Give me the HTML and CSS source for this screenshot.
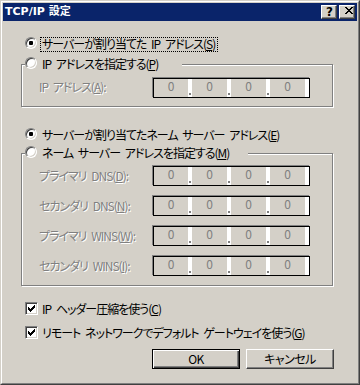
FILE: index.html
```html
<!DOCTYPE html>
<html lang="ja">
<head>
<meta charset="utf-8">
<title>TCP/IP 設定</title>
<link rel="stylesheet" href="styles.css">
</head>
<body>
<div class="window">
  <div class="frame">
    <div class="titlebar">
      <span class="title">TCP/IP 設定</span>
      <div class="caption-buttons">
        <span class="cbtn help">?</span>
        <span class="cbtn close"><svg width="8" height="7" viewBox="0 0 8 7" shape-rendering="crispEdges"><path fill="#000" d="M0 0h2v1H0zM6 0h2v1H6zM1 1h2v1H1zM5 1h2v1H5zM2 2h4v1H2zM3 3h2v1H3zM2 4h4v1H2zM1 5h2v1H1zM5 5h2v1H5zM0 6h2v1H0zM6 6h2v1H6z"/></svg></span>
      </div>
    </div>
    <div class="client">
      <div class="radio-row r1">
        <span class="radio checked"></span><span class="rlabel focus">サーバーが割り当てた IP アドレス(<u>S</u>)</span>
      </div>
      <fieldset class="group g1">
        <legend class="legend l1"><span class="radio-row"><span class="radio"></span><span class="rlabel">IP アドレスを指定する(<u>P</u>)</span></span></legend>
        <div class="field-row first">
          <span class="flabel">IP アドレス(<u>A</u>):</span>
          <div class="ipbox"><span class="oct">0</span><span class="sep dot"></span><span class="oct">0</span><span class="sep dot"></span><span class="oct">0</span><span class="sep dot"></span><span class="oct">0</span><span class="sep"></span></div>
        </div>
      </fieldset>
      <div class="radio-row r3">
        <span class="radio checked"></span><span class="rlabel">サーバーが割り当てたネーム サーバー アドレス(<u>E</u>)</span>
      </div>
      <fieldset class="group g2">
        <legend class="legend l2"><span class="radio-row"><span class="radio"></span><span class="rlabel">ネーム サーバー アドレスを指定する(<u>M</u>)</span></span></legend>
        <div class="field-row first">
          <span class="flabel">プライマリ DNS(<u>D</u>):</span>
          <div class="ipbox"><span class="oct">0</span><span class="sep dot"></span><span class="oct">0</span><span class="sep dot"></span><span class="oct">0</span><span class="sep dot"></span><span class="oct">0</span><span class="sep"></span></div>
        </div>
        <div class="field-row">
          <span class="flabel">セカンダリ DNS(<u>N</u>):</span>
          <div class="ipbox"><span class="oct">0</span><span class="sep dot"></span><span class="oct">0</span><span class="sep dot"></span><span class="oct">0</span><span class="sep dot"></span><span class="oct">0</span><span class="sep"></span></div>
        </div>
        <div class="field-row">
          <span class="flabel">プライマリ WINS(<u>W</u>):</span>
          <div class="ipbox"><span class="oct">0</span><span class="sep dot"></span><span class="oct">0</span><span class="sep dot"></span><span class="oct">0</span><span class="sep dot"></span><span class="oct">0</span><span class="sep"></span></div>
        </div>
        <div class="field-row">
          <span class="flabel">セカンダリ WINS(<u>I</u>):</span>
          <div class="ipbox"><span class="oct">0</span><span class="sep dot"></span><span class="oct">0</span><span class="sep dot"></span><span class="oct">0</span><span class="sep dot"></span><span class="oct">0</span><span class="sep"></span></div>
        </div>
      </fieldset>
      <div class="check-row c1">
        <span class="checkbox"><svg width="11" height="11" viewBox="1 1 11 11" shape-rendering="crispEdges"><path fill="#000" d="M3 5h1v3H3zM4 6h1v3H4zM5 7h1v3H5zM6 6h1v3H6zM7 5h1v3H7zM8 4h1v3H8zM9 3h1v3H9z"/></svg></span>
        <span class="clabel">IP ヘッダー圧縮を使う(<u>C</u>)</span>
      </div>
      <div class="check-row c2">
        <span class="checkbox"><svg width="11" height="11" viewBox="1 1 11 11" shape-rendering="crispEdges"><path fill="#000" d="M3 5h1v3H3zM4 6h1v3H4zM5 7h1v3H5zM6 6h1v3H6zM7 5h1v3H7zM8 4h1v3H8zM9 3h1v3H9z"/></svg></span>
        <span class="clabel">リモート ネットワークでデフォルト ゲートウェイを使う(<u>G</u>)</span>
      </div>
      <div class="buttons">
        <span class="btn default">OK</span>
        <span class="btn">キャンセル</span>
      </div>
    </div>
  </div>
</div>
</body>
</html>
```
FILE: styles.css
```css
html, body {
  margin: 0;
  padding: 0;
  background: #d4d0c8;
}

.window {
  width: 360px;
  height: 385px;
  box-sizing: border-box;
  border: 1px solid;
  border-color: #d4d0c8 #404040 #404040 #d4d0c8;
  overflow: hidden;
}

.frame {
  height: 100%;
  box-sizing: border-box;
  border: 1px solid;
  border-color: #fff #808080 #808080 #fff;
  padding: 1px;
  background: #d4d0c8;
  display: flex;
  flex-direction: column;
}

.titlebar {
  height: 18px;
  flex: none;
  background: #0a246a;
  display: flex;
  align-items: center;
  justify-content: space-between;
  padding: 0 2px;
}

.title {
  color: #fff;
  font: bold 11px "DejaVu Sans", "Noto Sans CJK JP", sans-serif;
  line-height: 18px;
  white-space: nowrap;
}

.caption-buttons {
  display: flex;
  gap: 2px;
}

.cbtn {
  width: 16px;
  height: 14px;
  box-sizing: border-box;
  border: 1px solid;
  border-color: #fff #404040 #404040 #fff;
  box-shadow: inset -1px -1px 0 #808080;
  background: #d4d0c8;
  display: flex;
}

.cbtn.help {
  font: bold 12px "DejaVu Sans", sans-serif;
  line-height: 12px;
  color: #000;
  justify-content: center;
  padding-left: 1px;
}

.cbtn.close svg {
  margin: 1px 0 0 5px;
}

.client {
  flex: 1;
  padding-left: 18px;
  font-family: "Noto Sans CJK JP", sans-serif;
  font-size: 12px;
  font-feature-settings: "palt";
  letter-spacing: -1px;
  word-spacing: 3px;
  color: #000;
  white-space: nowrap;
}

u {
  text-decoration: underline;
  text-underline-offset: 1px;
}

.radio-row {
  display: flex;
  align-items: flex-start;
  height: 15px;
}

.r1 {
  margin: 16px 0 0 4px;
}

.r3 {
  margin: 21px 0 0 4px;
}

.radio {
  width: 12px;
  height: 12px;
  flex: none;
  box-sizing: border-box;
  border-radius: 50%;
  border: 1px solid;
  border-color: #808080 #fff #fff #808080;
  box-shadow: inset 1px 1px 0 #404040, inset -1px -1px 0 #d4d0c8;
  background: #fff;
  display: flex;
  align-items: center;
  justify-content: center;
}

.radio.checked::after {
  content: "";
  width: 4px;
  height: 4px;
  border-radius: 1px;
  background: #000;
}

.rlabel {
  margin-left: 3px;
  height: 15px;
  box-sizing: border-box;
  padding: 0 2px 0 1px;
  border: 1px solid transparent;
  line-height: 12px;
}

.rlabel.focus {
  border: 1px dotted #000;
}

.group {
  margin: 0;
  padding: 0 0 8px 3px;
  border: 1px solid #808080;
  box-shadow: 1px 1px 0 #fff, inset 1px 1px 0 #fff;
  width: 312px;
  box-sizing: border-box;
  min-width: 0;
}

.g1 {
  margin-top: 5px;
}

.g2 {
  margin-top: 3px;
  padding-bottom: 9px;
}

.legend {
  padding: 0;
  margin: 0;
  height: 15px;
  background: #d4d0c8;
}

.l1 {
  width: 157px;
}

.l2 {
  width: 223px;
}

.field-row {
  display: flex;
  align-items: center;
  height: 20px;
  margin-top: 10px;
  padding-left: 14px;
}

.g1 .field-row.first {
  margin-top: 6px;
}

.g2 .field-row.first {
  margin-top: 5px;
}

.flabel {
  width: 114px;
  flex: none;
  color: #808080;
  text-shadow: 1px 1px 0 #fff;
  line-height: 14px;
  margin-top: -2px;
}

.g2 .flabel {
  margin-top: 0;
}

.ipbox {
  width: 157px;
  height: 20px;
  box-sizing: border-box;
  border: 1px solid #000;
  box-shadow: -1px -1px 0 #808080;
  background: #d4d0c8;
  display: grid;
  grid-template-columns: 34px 4px 35px 4px 35px 4px 35px 4px;
  letter-spacing: 0;
}

.oct {
  color: #808080;
  text-align: center;
  line-height: 12px;
  padding-top: 1px;
}

.sep {
  background: #fff;
  display: flex;
  align-items: flex-end;
}

.sep.dot::before {
  content: "";
  width: 2px;
  height: 2px;
  background: #808080;
  margin: 0 0 2px 1px;
}

.check-row {
  display: flex;
  align-items: center;
  height: 13px;
  margin-left: 4px;
}

.c1 {
  margin-top: 16px;
}

.c2 {
  margin-top: 11px;
}

.checkbox {
  width: 13px;
  height: 13px;
  flex: none;
  box-sizing: border-box;
  border: 1px solid;
  border-color: #808080 #fff #fff #808080;
  box-shadow: inset 1px 1px 0 #404040, inset -1px -1px 0 #d4d0c8;
  background: #fff;
  display: flex;
}

.clabel {
  margin-left: 4px;
  line-height: 13px;
}

.buttons {
  display: flex;
  gap: 6px;
  margin-top: 10px;
  padding-left: 131px;
}

.btn {
  width: 88px;
  height: 20px;
  box-sizing: border-box;
  border: 1px solid;
  border-color: #fff #404040 #404040 #fff;
  box-shadow: inset -1px -1px 0 #808080;
  background: #d4d0c8;
  display: flex;
  align-items: center;
  justify-content: center;
  line-height: 14px;
  letter-spacing: -0.5px;
}

.btn.default {
  border-color: #000;
  box-shadow: inset 1px 1px 0 #fff, inset -1px -1px 0 #404040, inset -2px -2px 0 #808080;
}
```
